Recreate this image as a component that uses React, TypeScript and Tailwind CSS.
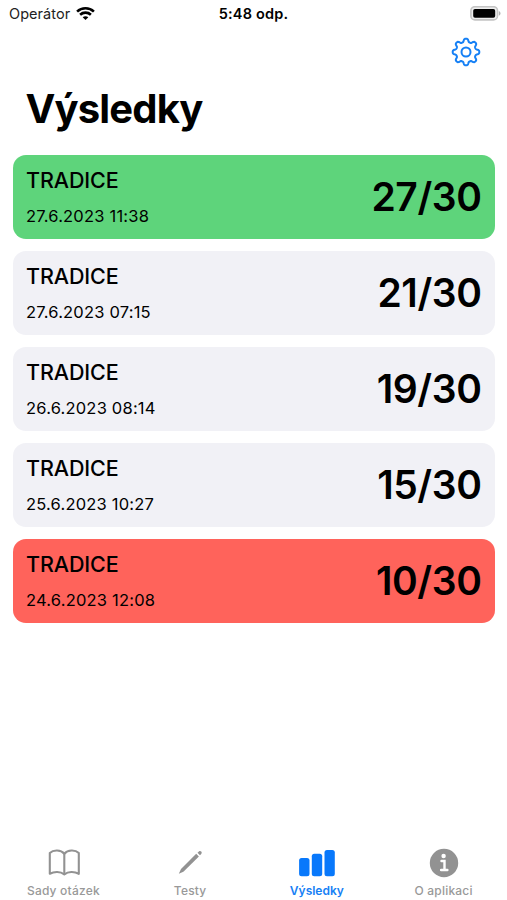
const results = [
  { title: "TRADICE", date: "27.6.2023 11:38", score: "27/30", card: "bg-[#5ed47b]" },
  { title: "TRADICE", date: "27.6.2023 07:15", score: "21/30", card: "bg-[#f1f1f6]" },
  { title: "TRADICE", date: "26.6.2023 08:14", score: "19/30", card: "bg-[#f1f1f6]" },
  { title: "TRADICE", date: "25.6.2023 10:27", score: "15/30", card: "bg-[#f1f1f6]" },
  { title: "TRADICE", date: "24.6.2023 12:08", score: "10/30", card: "bg-[#ff635b]" },
];

// Eight soft teeth around the centre of a 30x30 box
const gearPath =
  Array.from({ length: 160 }, (_, i) => {
    const angle = (i / 160) * Math.PI * 2;
    const wave = Math.tanh(1.7 * Math.cos(angle * 8)) / Math.tanh(1.7);
    const r = 11.7 + 1.6 * wave;
    const x = 15 + r * Math.sin(angle);
    const y = 15 - r * Math.cos(angle);
    return `${i === 0 ? "M" : "L"}${x.toFixed(2)} ${y.toFixed(2)}`;
  }).join(" ") + "Z";

const GearIcon = () => (
  <svg className="h-[30px] w-[30px]" viewBox="0 0 30 30" fill="none" stroke="#1680f5" strokeWidth="2" strokeLinejoin="round">
    <path d={gearPath} />
    <circle cx="15" cy="15" r="4.5" />
  </svg>
);

const WifiIcon = () => (
  <svg className="h-[14px] w-[19px]" viewBox="0 0 19 14" fill="none" stroke="#000" strokeWidth="2.6">
    <path d="M1.1 4.6C5.7.2 13.3.2 17.9 4.6" />
    <path d="M4.1 7.7c3-2.8 7.8-2.8 10.8 0" />
    <path d="M9.5 13.1 6.7 10.2c1.6-1.4 4-1.4 5.6 0Z" fill="#000" stroke="none" />
  </svg>
);

const BatteryIcon = () => (
  <svg className="h-[16px] w-[32px]" viewBox="0 0 32 16">
    <rect x="0.9" y="0.7" width="26.6" height="13.2" rx="4" fill="#eee" stroke="#c4c4c4" strokeWidth="1.6" />
    <rect x="3.2" y="3" width="22" height="8.8" rx="1.8" fill="#000" />
    <path d="M28.8 4.9c2.3 1 2.3 3.8 0 4.8Z" fill="#b0b0b0" />
  </svg>
);

const BookIcon = () => (
  <svg className="h-[30px] w-[36px]" viewBox="0 0 36 30" fill="none" stroke="#929292" strokeWidth="2.1" strokeLinejoin="round">
    <path d="M19.3 5.7C15.8 1.6 8.3 1.6 4.8 5v20.8c4.5-2.4 10.5-2.4 14.5.6 4-3 10-3 14.5-.6V5c-3.5-3.4-11-3.4-14.5.7Z" />
    <path d="M19.3 5.7v20.7" />
  </svg>
);

const PencilIcon = () => (
  <svg className="h-[30px] w-[30px]" viewBox="0 0 30 30" fill="#929292">
    <path d="m6 21 15.2-15.2 2.7 2.7L8.4 23.8l-4.6 1.9Z" />
    <path d="m22.5 4.7 1.4-1.2c.8-.7 1.7-.6 2.3.1.7.7.7 1.6 0 2.3L25 7.2Z" />
  </svg>
);

const BarsIcon = () => (
  <svg className="h-[30px] w-[38px]" viewBox="0 0 38 30" fill="#0878fb">
    <rect x="1.1" y="9.9" width="10.4" height="18.3" rx="2.5" />
    <rect x="13.8" y="5.8" width="10.4" height="22.4" rx="2.5" />
    <rect x="26.5" y="2" width="10.3" height="26.2" rx="2.5" />
  </svg>
);

const InfoIcon = () => (
  <svg className="h-[30px] w-[30px]" viewBox="0 0 30 30">
    <circle cx="15" cy="15" r="14.2" fill="#929292" />
    <circle cx="14.6" cy="8" r="2.2" fill="#fff" />
    <path d="M12.5 13h3v8.7M12.1 22h6.3" fill="none" stroke="#fff" strokeWidth="2.4" strokeLinecap="round" />
  </svg>
);

const tabs = [
  { label: "Sady otázek", icon: <BookIcon />, color: "text-[#999999] font-medium tracking-[0.2px]" },
  { label: "Testy", icon: <PencilIcon />, color: "text-[#999999] font-medium tracking-[0.2px]" },
  { label: "Výsledky", icon: <BarsIcon />, color: "text-[#1680f5] font-semibold" },
  { label: "O aplikaci", icon: <InfoIcon />, color: "text-[#999999] font-medium tracking-[0.2px]" },
];

export default function App() {
  return (
    <div className="flex h-[900px] w-[507px] flex-col overflow-hidden bg-white font-['Inter',sans-serif] text-black">
      {/* Status bar */}
      <header className="grid h-[27px] grid-cols-3 items-center pl-[9px] pr-[5px]">
        <div className="flex items-center gap-[6px]">
          <span className="text-[14.5px] tracking-[0.05px] text-[#222]">Operátor</span>
          <WifiIcon />
        </div>
        <span className="-ml-1 text-center text-[14.5px] font-semibold tracking-[0.2px]">5:48 odp.</span>
        <div className="flex justify-end">
          <BatteryIcon />
        </div>
      </header>

      <div className="flex h-[50px] items-center justify-end pr-[26px]">
        <button aria-label="Nastavení">
          <GearIcon />
        </button>
      </div>

      <h1 className="h-[77.5px] pl-[25.5px] pt-[7px] text-[40px] leading-[50px] font-bold tracking-[-0.85px]">Výsledky</h1>

      {/* Results */}
      <main className="flex flex-1 flex-col gap-3 pl-[13px] pr-[12.5px]">
        {results.map((result) => (
          <section key={result.date} className={`flex h-[84px] items-center justify-between rounded-[13px] px-[13px] ${result.card}`}>
            <div className="flex flex-col pt-[2px]">
              <h2 className="text-[21.5px] leading-[28px] font-[550] tracking-[-0.1px]">{result.title}</h2>
              <p className="mt-2 text-[16.5px] leading-[28px] tracking-[0.2px]">{result.date}</p>
            </div>
            <span className="pt-px text-[39px] leading-[50px] font-[560] tracking-[-0.4px]">{result.score}</span>
          </section>
        ))}
      </main>

      {/* Tab bar */}
      <nav className="grid h-[52px] grid-cols-4">
        {tabs.map((tab) => (
          <button key={tab.label} className={`flex flex-col items-center ${tab.color}`}>
            {tab.icon}
            <span className="mt-[5px] text-[12px] leading-[16px]">{tab.label}</span>
          </button>
        ))}
      </nav>
    </div>
  );
}
